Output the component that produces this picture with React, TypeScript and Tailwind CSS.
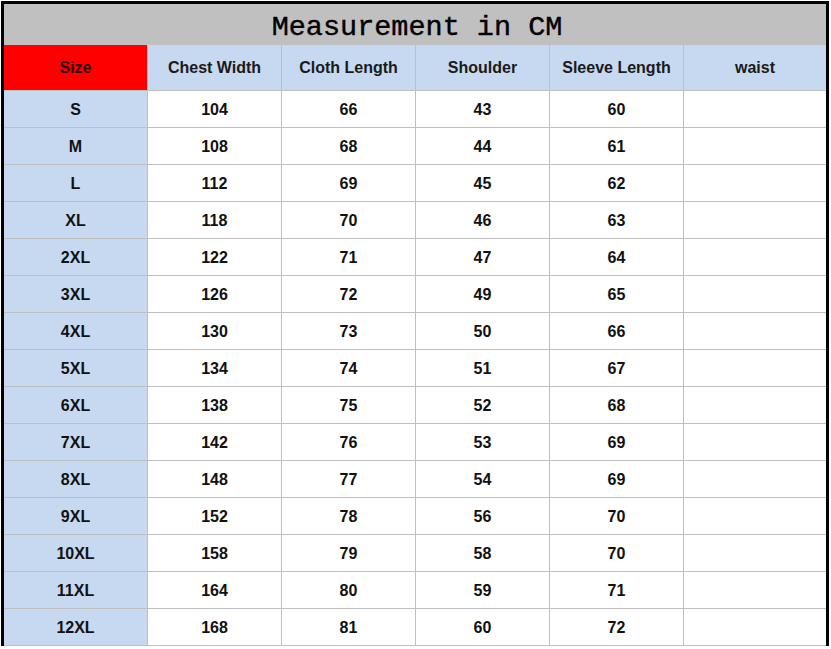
/*
 * Size chart: measurement table in CM with a grey title band,
 * light blue header row and size column.
 */

const columns = ["Chest Width", "Cloth Length", "Shoulder", "Sleeve Length", "waist"];

const rows: [string, string, string, string, string][] = [
  ["S", "104", "66", "43", "60"],
  ["M", "108", "68", "44", "61"],
  ["L", "112", "69", "45", "62"],
  ["XL", "118", "70", "46", "63"],
  ["2XL", "122", "71", "47", "64"],
  ["3XL", "126", "72", "49", "65"],
  ["4XL", "130", "73", "50", "66"],
  ["5XL", "134", "74", "51", "67"],
  ["6XL", "138", "75", "52", "68"],
  ["7XL", "142", "76", "53", "69"],
  ["8XL", "148", "77", "54", "69"],
  ["9XL", "152", "78", "56", "70"],
  ["10XL", "158", "79", "58", "70"],
  ["11XL", "164", "80", "59", "71"],
  ["12XL", "168", "81", "60", "72"],
];

const gridCols = "grid grid-cols-[144px_134px_134px_134px_134px_142px]";

export default function App() {
  return (
    <div className="bg-white w-[831px] h-[649px] pt-[1px] pl-[1px]">
      <div
        className="w-[828px] border-t-[3px] border-x-[3px] border-black"
        style={{ fontFamily: '"Liberation Sans", Arial, sans-serif' }}
      >
        <div
          className="h-[41px] bg-[#c0c0c0] flex items-center justify-center text-[28.5px] leading-none text-black pt-[7px] pl-[4px] [-webkit-text-stroke:0.4px_black]"
          style={{ fontFamily: '"Liberation Mono", "Courier New", monospace' }}
        >
          Measurement in CM
        </div>
        <div className={`${gridCols} h-[46px] text-[16px] font-bold text-[#1a1a1a]`}>
          <div className="bg-[#ff0000] border-r border-b border-[#bfbfbf] flex items-center justify-center text-[#2a0000]">
            Size
          </div>
          {columns.map((c, i) => (
            <div
              key={c}
              className={`bg-[#c6d9f0] border-b border-[#bfbfbf] flex items-center justify-center ${
                i < columns.length - 1 ? "border-r" : ""
              }`}
            >
              {c}
            </div>
          ))}
        </div>
        {rows.map((r) => (
          <div key={r[0]} className={`${gridCols} h-[37px] text-[16px] font-bold text-[#111]`}>
            <div className="bg-[#c6d9f0] border-r border-b border-[#bfbfbf] flex items-center justify-center pt-[2px]">
              {r[0]}
            </div>
            {r.slice(1).map((v, i) => (
              <div
                key={i}
                className="bg-white border-r border-b border-[#bfbfbf] flex items-center justify-center pt-[2px]"
              >
                {v}
              </div>
            ))}
            <div className="bg-white border-b border-[#bfbfbf]" />
          </div>
        ))}
      </div>
    </div>
  );
}
